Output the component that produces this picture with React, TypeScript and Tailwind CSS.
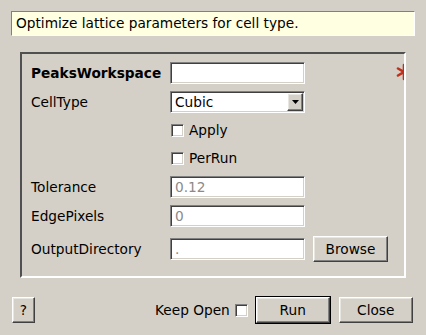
import React from 'react';

const sunken =
  'border border-t-[#808080] border-l-[#808080] border-b-white border-r-white shadow-[inset_1px_1px_0_#404040,inset_-1px_-1px_0_#d4d0c8]';
const raised =
  'border border-t-white border-l-white border-b-[#404040] border-r-[#404040] shadow-[inset_-1px_-1px_0_#808080,inset_1px_1px_0_#e8e6e1]';

const TextBox: React.FC<{ value?: string; muted?: boolean }> = ({ value = '', muted }) => (
  <div className={`w-[135px] h-[22px] bg-white flex items-center px-[4px] ${sunken}`}>
    <span className={muted ? 'text-[#8a8a8a]' : 'text-black'}>{value}</span>
  </div>
);

const CheckBox: React.FC = () => <div className={`w-[13px] h-[13px] bg-white shrink-0 ${sunken}`} />;

const Label: React.FC<{ children: React.ReactNode; bold?: boolean }> = ({ children, bold }) => (
  <div className={`w-[139px] shrink-0 ${bold ? 'font-bold' : ''}`}>{children}</div>
);

export default function App() {
  return (
    <div
      className="w-[426px] h-[335px] bg-[#d4d0c8] text-[13.7px] text-black flex flex-col"
      style={{ fontFamily: '"DejaVu Sans", sans-serif' }}
    >
      {/* description */}
      <div className="mt-[11px] ml-[11px] w-[404px] h-[25px] bg-[#ffffe1] border border-t-[#808080] border-l-[#808080] border-b-white border-r-white flex items-center px-[4px]">
        Optimize lattice parameters for cell type.
      </div>

      {/* properties frame */}
      <div className="relative overflow-hidden mt-[16px] ml-[20px] w-[386px] h-[226px] border-2 border-t-[#505050] border-l-[#505050] border-b-white border-r-white pl-[9px] pt-[8px] flex flex-col gap-[7px]">
        <div className="flex items-center h-[22px]">
          <Label bold>PeaksWorkspace</Label>
          <TextBox />
        </div>
        <svg className="absolute right-[-9px] top-[9px]" width="18" height="18" viewBox="0 0 18 18">
          <g stroke="#c0301c" strokeWidth="2.6" strokeLinecap="round">
            <line x1="9" y1="2" x2="9" y2="16" />
            <line x1="3" y1="5.5" x2="15" y2="12.5" />
            <line x1="3" y1="12.5" x2="15" y2="5.5" />
          </g>
        </svg>

        <div className="flex items-center h-[22px]">
          <Label>CellType</Label>
          <div className={`w-[135px] h-[22px] bg-white flex items-center justify-between pl-[4px] pr-[1px] ${sunken}`}>
            <span>Cubic</span>
            <div className={`w-[16px] h-[18px] bg-[#d4d0c8] flex items-center justify-center ${raised}`}>
              <svg width="7" height="4" viewBox="0 0 7 4">
                <polygon points="0,0 7,0 3.5,4" fill="#000" />
              </svg>
            </div>
          </div>
        </div>

        <div className="flex items-center h-[21px]">
          <Label>{''}</Label>
          <div className="flex items-center gap-[5px] pl-[1px]">
            <CheckBox />
            <span>Apply</span>
          </div>
        </div>

        <div className="flex items-center h-[21px]">
          <Label>{''}</Label>
          <div className="flex items-center gap-[5px] pl-[1px]">
            <CheckBox />
            <span>PerRun</span>
          </div>
        </div>

        <div className="flex items-center h-[22px]">
          <Label>Tolerance</Label>
          <TextBox value="0.12" muted />
        </div>

        <div className="flex items-center h-[22px]">
          <Label>EdgePixels</Label>
          <TextBox value="0" muted />
        </div>

        <div className="mt-[2px] flex items-center h-[26px]">
          <Label>OutputDirectory</Label>
          <TextBox value="." muted />
          <button className={`ml-[8px] w-[75px] h-[26px] bg-[#d4d0c8] flex items-center justify-center ${raised}`}>
            Browse
          </button>
        </div>
      </div>

      {/* bottom bar */}
      <div className="mt-[18px] ml-[12px] flex items-center h-[28px]">
        <button className={`w-[23px] h-[26px] bg-[#d4d0c8] flex items-center justify-center ${raised}`}>?</button>
        <span className="ml-[120px]">Keep Open</span>
        <div className="ml-[5px]">
          <CheckBox />
        </div>
        <div className="ml-[7px] w-[76px] h-[28px] border border-black">
          <button className={`w-full h-full bg-[#d4d0c8] flex items-center justify-center ${raised}`}>Run</button>
        </div>
        <button className={`ml-[8px] w-[74px] h-[26px] bg-[#d4d0c8] flex items-center justify-center ${raised}`}>
          Close
        </button>
      </div>
    </div>
  );
}
